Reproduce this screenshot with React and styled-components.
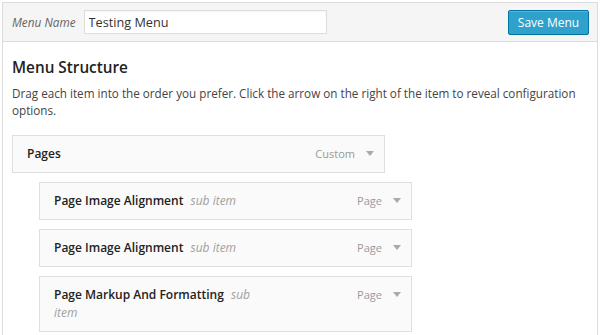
import styled, { createGlobalStyle } from "styled-components";

const Global = createGlobalStyle`
  html, body {
    margin: 0;
    padding: 0;
    background: #fff;
    overflow: hidden;
  }
  body {
    font-family: "Open Sans", "Noto Sans", sans-serif;
    color: #444;
  }
`;

const Frame = styled.div`
  margin: 2px 2px 0 2px;
  height: calc(100vh - 2px);
  box-sizing: border-box;
  border: 1px solid #dcdcdc;
  border-bottom: none;
  background: #fff;
`;

const Header = styled.div`
  display: flex;
  align-items: center;
  justify-content: space-between;
  height: 38px;
  padding: 0 8px 0 9px;
  background: #f5f5f5;
  border-bottom: 1px solid #dddddd;
`;

const NameField = styled.label`
  display: flex;
  align-items: center;
  gap: 8px;
`;

const Label = styled.span`
  font-size: 11.8px;
  font-style: italic;
  color: #666;
`;

const Input = styled.input`
  box-sizing: border-box;
  width: 243px;
  height: 24px;
  padding: 0 4px;
  border: 1px solid #dddddd;
  background: #fff;
  font-family: "Open Sans", sans-serif;
  font-size: 12.7px;
  color: #333;
  outline: none;
  box-shadow: inset 0 1px 2px rgba(0, 0, 0, 0.04);
`;

const SaveButton = styled.button`
  box-sizing: border-box;
  width: 81px;
  height: 25px;
  padding: 0;
  border: 1px solid #0074a2;
  border-radius: 2px;
  background: #2ea2cc;
  box-shadow: inset 0 1px 0 rgba(120, 200, 230, 0.5);
  color: #fff;
  font-family: "Open Sans", sans-serif;
  font-size: 12px;
  cursor: pointer;
`;

const Body = styled.div`
  padding: 0 9px;
`;

const Title = styled.h3`
  margin: 13px 0 0 0;
  font-size: 15.3px;
  font-weight: 600;
  line-height: 24px;
  color: #222;
`;

const Help = styled.p`
  margin: 6px 0 0 0;
  font-size: 11.7px;
  line-height: 17px;
  color: #444;
`;

const List = styled.ul`
  list-style: none;
  margin: 16px 0 0 0;
  padding: 0;
`;

const Item = styled.li`
  margin: 0 0 9px ${p => p.depth * 27}px;
  width: 373px;
`;

const Handle = styled.div`
  position: relative;
  box-sizing: border-box;
  min-height: 38px;
  padding: 9px 12px 9px 14px;
  border: 1px solid #dfdfdf;
  background: #fafafa;
`;

const ItemTitle = styled.span`
  display: block;
  margin-right: 145px;
  font-size: 12px;
  font-weight: 600;
  line-height: 18px;
  color: #222;
`;

const SubTag = styled.span`
  margin-left: 4px;
  font-weight: 400;
  font-style: italic;
  color: #a0a0a0;
`;

const Controls = styled.span`
  position: absolute;
  top: 9px;
  right: 10px;
  display: flex;
  align-items: center;
  gap: 11px;
  font-size: 11px;
  line-height: 18px;
  color: #999;
`;

const Arrow = styled.span`
  width: 0;
  height: 0;
  border-left: 4px solid transparent;
  border-right: 4px solid transparent;
  border-top: 5px solid #aaa;
  margin-top: -2px;
`;

const items = [
  { title: "Pages", type: "Custom", depth: 0 },
  { title: "Page Image Alignment", type: "Page", depth: 1, sub: true },
  { title: "Page Image Alignment", type: "Page", depth: 1, sub: true },
  { title: "Page Markup And Formatting", type: "Page", depth: 1, sub: true },
];

const App = () => {
  return (
    <>
      <Global />
      <Frame>
        <Header>
          <NameField>
            <Label>Menu Name</Label>
            <Input defaultValue="Testing Menu" />
          </NameField>
          <SaveButton>Save Menu</SaveButton>
        </Header>
        <Body>
          <Title>Menu Structure</Title>
          <Help>
            Drag each item into the order you prefer. Click the arrow on the right of the item to reveal configuration options.
          </Help>
          <List>
            {items.map((item, i) => (
              <Item key={i} depth={item.depth}>
                <Handle>
                  <ItemTitle>
                    {item.title}
                    {item.sub && <SubTag> sub item</SubTag>}
                  </ItemTitle>
                  <Controls>
                    {item.type}
                    <Arrow />
                  </Controls>
                </Handle>
              </Item>
            ))}
          </List>
        </Body>
      </Frame>
    </>
  );
};

export default App;
